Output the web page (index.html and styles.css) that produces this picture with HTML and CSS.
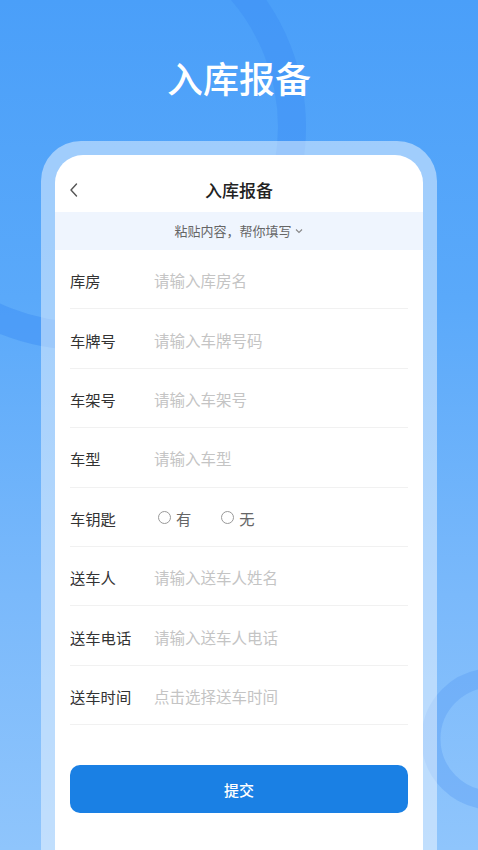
FILE: index.html
```html
<!DOCTYPE html>
<html lang="zh">
<head>
<meta charset="utf-8">
<link rel="stylesheet" href="styles.css">
</head>
<body>
<div class="page">
  <svg class="deco" width="478" height="850" viewBox="0 0 478 850">
    <circle cx="83" cy="127" r="209" fill="none" stroke="#3d8ff5" stroke-opacity="0.5" stroke-width="28"/>
    <circle cx="492" cy="739" r="61" fill="none" stroke="#5b9ef5" stroke-opacity="0.4" stroke-width="19"/>
  </svg>
  <h1 class="hero">入库报备</h1>
  <div class="frame">
    <div class="card">
      <div class="head">
        <svg class="back" width="12" height="16" viewBox="0 0 12 16"><path d="M8.5 2 L3 8 L8.5 14" fill="none" stroke="#555" stroke-width="1.4" stroke-linecap="round" stroke-linejoin="round"/></svg>
        <span class="head-title">入库报备</span>
      </div>
      <div class="paste">粘贴内容，帮你填写 <svg class="chev" width="8" height="6" viewBox="0 0 8 6"><path d="M1 1.5 L4 4.5 L7 1.5" fill="none" stroke="#888" stroke-width="1.1"/></svg></div>
      <div class="form">
        <div class="row"><span class="label">库房</span><span class="ph">请输入库房名</span></div>
        <div class="row"><span class="label">车牌号</span><span class="ph">请输入车牌号码</span></div>
        <div class="row"><span class="label">车架号</span><span class="ph">请输入车架号</span></div>
        <div class="row"><span class="label">车型</span><span class="ph">请输入车型</span></div>
        <div class="row"><span class="label">车钥匙</span>
          <span class="radios">
            <span class="radio"><span class="dot"></span>有</span>
            <span class="radio"><span class="dot"></span>无</span>
          </span>
        </div>
        <div class="row"><span class="label">送车人</span><span class="ph">请输入送车人姓名</span></div>
        <div class="row"><span class="label">送车电话</span><span class="ph">请输入送车人电话</span></div>
        <div class="row"><span class="label">送车时间</span><span class="ph">点击选择送车时间</span></div>
        <button class="submit">提交</button>
      </div>
    </div>
  </div>
</div>
</body>
</html>
```

FILE: styles.css
```css
* { box-sizing: border-box; }
html, body { margin: 0; padding: 0; }
body {
  font-family: "Noto Sans CJK SC", "Noto Sans", sans-serif;
  width: 478px;
  height: 850px;
  overflow: hidden;
}
.page {
  position: relative;
  width: 478px;
  height: 850px;
  overflow: hidden;
  background: linear-gradient(180deg, #4a9ff9 0%, #5aa9fa 35%, #7ab9fb 70%, #8fc5fc 100%);
}
.deco {
  position: absolute;
  left: 0;
  top: 0;
}
.hero {
  position: relative;
  margin: 0;
  padding-top: 55px;
  height: 99px;
  font-size: 36px;
  line-height: 44px;
  font-weight: 500;
  color: #ffffff;
  text-align: center;
}
.frame {
  position: relative;
  margin: 42px 41px 0;
  padding: 14px 14px 0;
  border-radius: 40px 40px 0 0;
  background: rgba(255, 255, 255, 0.45);
  height: 720px;
}
.card {
  background: #ffffff;
  border-radius: 28px 28px 0 0;
  height: 100%;
}
.head {
  position: relative;
  height: 57px;
  padding-top: 23px;
  text-align: center;
}
.head-title {
  font-size: 17px;
  line-height: 22px;
  font-weight: 500;
  color: #222;
}
.back {
  position: absolute;
  left: 13px;
  top: 27px;
}
.paste {
  height: 38px;
  background: #eff5fe;
  font-size: 13px;
  line-height: 38px;
  color: #666;
  text-align: center;
}
.chev { vertical-align: 2px; margin-left: 1px; }
.form {
  padding: 0 15px;
}
.row {
  display: flex;
  align-items: center;
  height: 59.4px;
  padding-top: 2px;
  border-bottom: 1px solid #f1f1f1;
  font-size: 15.3px;
}
.label {
  width: 84px;
  color: #333;
}
.ph {
  color: #c4c4c4;
  font-size: 15.5px;
}
.radios {
  display: flex;
  gap: 30px;
  padding-left: 4px;
  color: #666;
}
.radio {
  display: flex;
  align-items: center;
  gap: 5px;
}
.dot {
  width: 13px;
  height: 13px;
  border: 1px solid #999;
  border-radius: 50%;
}
.submit {
  display: block;
  width: 100%;
  margin-top: 40px;
  height: 48px;
  border: 0;
  border-radius: 10px;
  background: #1a80e4;
  color: #fff;
  font-family: "Noto Sans CJK SC", sans-serif;
  font-size: 15px;
  font-weight: 500;
}
```
